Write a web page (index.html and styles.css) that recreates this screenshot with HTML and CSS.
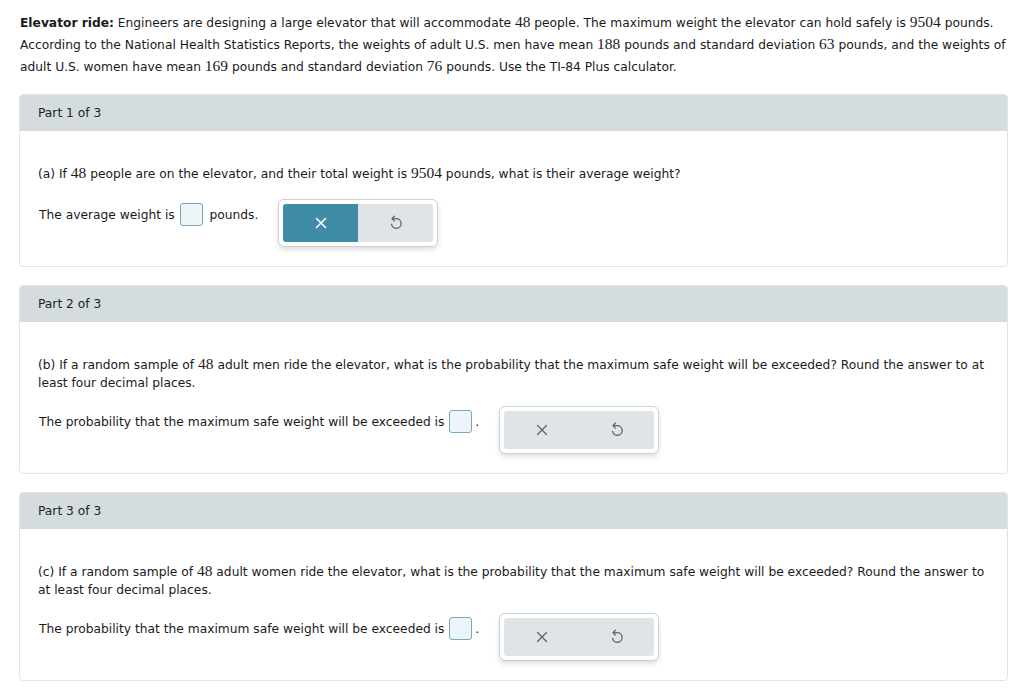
FILE: index.html
```html
<!DOCTYPE html>
<html>
<head>
<meta charset="utf-8">
<link rel="stylesheet" href="styles.css">
</head>
<body>
<p class="intro"><b>Elevator ride:</b> Engineers are designing a large elevator that will accommodate <span class="num">48</span> people. The maximum weight the elevator can hold safely is <span class="num">9504</span> pounds. According to the National Health Statistics Reports, the weights of adult U.S. men have mean <span class="num">188</span> pounds and standard deviation <span class="num">63</span> pounds, and the weights of adult U.S. women have mean <span class="num">169</span> pounds and standard deviation <span class="num">76</span> pounds. Use the TI-84 Plus calculator.</p>

<section class="card">
  <div class="card-head">Part 1 of 3</div>
  <div class="card-body">
    <p class="question">(a) If <span class="num">48</span> people are on the elevator, and their total weight is <span class="num">9504</span> pounds, what is their average weight?</p>
    <div class="answer-row">
      <div class="answer-text">The average weight is <span class="box"></span> pounds.</div>
      <div class="tools">
        <button class="tool active"><svg viewBox="0 0 12 12" width="12" height="12"><path d="M1.5 1.5 L10.5 10.5 M10.5 1.5 L1.5 10.5" /></svg></button>
        <button class="tool"><svg viewBox="0 0 14 16" width="14" height="16"><path d="M5.4 1.3 L3 3.7 L5.4 6.1 M3 3.7 H7.2 A4.8 4.8 0 1 1 2.6 9.4" /></svg></button>
      </div>
    </div>
  </div>
</section>

<section class="card">
  <div class="card-head">Part 2 of 3</div>
  <div class="card-body">
    <p class="question">(b) If a random sample of <span class="num">48</span> adult men ride the elevator, what is the probability that the maximum safe weight will be exceeded? Round the answer to at least four decimal places.</p>
    <div class="answer-row two">
      <div class="answer-text">The probability that the maximum safe weight will be exceeded is <span class="box"></span>.</div>
      <div class="tools">
        <button class="tool"><svg viewBox="0 0 12 12" width="12" height="12"><path d="M1.5 1.5 L10.5 10.5 M10.5 1.5 L1.5 10.5" /></svg></button>
        <button class="tool"><svg viewBox="0 0 14 16" width="14" height="16"><path d="M5.4 1.3 L3 3.7 L5.4 6.1 M3 3.7 H7.2 A4.8 4.8 0 1 1 2.6 9.4" /></svg></button>
      </div>
    </div>
  </div>
</section>

<section class="card">
  <div class="card-head">Part 3 of 3</div>
  <div class="card-body">
    <p class="question">(c) If a random sample of <span class="num">48</span> adult women ride the elevator, what is the probability that the maximum safe weight will be exceeded? Round the answer to at least four decimal places.</p>
    <div class="answer-row two">
      <div class="answer-text">The probability that the maximum safe weight will be exceeded is <span class="box"></span>.</div>
      <div class="tools">
        <button class="tool"><svg viewBox="0 0 12 12" width="12" height="12"><path d="M1.5 1.5 L10.5 10.5 M10.5 1.5 L1.5 10.5" /></svg></button>
        <button class="tool"><svg viewBox="0 0 14 16" width="14" height="16"><path d="M5.4 1.3 L3 3.7 L5.4 6.1 M3 3.7 H7.2 A4.8 4.8 0 1 1 2.6 9.4" /></svg></button>
      </div>
    </div>
  </div>
</section>
</body>
</html>
```

FILE: styles.css
```css
html, body {
  margin: 0;
  background: #ffffff;
}
body {
  padding: 12px 16px 0 19px;
  font-family: "DejaVu Sans", Verdana, sans-serif;
  font-size: 12.25px;
  color: #1a1a1a;
}
.intro {
  margin: 0 0 16px 1px;
  line-height: 22px;
}
.num {
  font-family: "Liberation Serif", "Times New Roman", serif;
  font-size: 15.5px;
  line-height: 1;
}
.card {
  border: 1px solid #dfe4e6;
  border-radius: 4px;
  margin-bottom: 18px;
  overflow: hidden;
}
.card-head {
  background: #d5dcdf;
  height: 36px;
  line-height: 36px;
  padding-left: 18px;
  color: #222;
}
.card-body {
  padding: 34px 18px 19px 18px;
}
.question {
  margin: 0;
  line-height: 18px;
}
.answer-row {
  display: flex;
  align-items: flex-start;
  margin-top: 16px;
}
.answer-row.two {
  margin-top: 14px;
}
.answer-text {
  padding-top: 4px;
  padding-left: 1px;
  line-height: 20px;
  display: flex;
  align-items: center;
  white-space: pre;
}
.box {
  display: inline-block;
  width: 21px;
  height: 21px;
  border: 1px solid #7aa8bd;
  border-radius: 3px;
  background: #eef5f8;
  margin: 0 3px 0 1px;
}
.tools {
  display: flex;
  margin-left: 20px;
  padding: 4px;
  border: 1px solid #c9d2d7;
  border-radius: 6px;
  background: #fff;
  box-shadow: 0 3px 5px rgba(0, 0, 0, 0.12);
}
.tool {
  width: 75px;
  height: 38px;
  border: none;
  margin: 0;
  padding: 0;
  background: #dfe4e7;
  display: flex;
  align-items: center;
  justify-content: center;
}
.tool:first-child {
  border-radius: 3px 0 0 3px;
}
.tool:last-child {
  border-radius: 0 3px 3px 0;
}
.tool svg path {
  fill: none;
  stroke: #5a6670;
  stroke-width: 1.3;
  stroke-linecap: round;
  stroke-linejoin: round;
}
.tool.active {
  background: #3f8ca6;
}
.tool.active svg path {
  stroke: #ffffff;
  stroke-width: 1.6;
}
```
